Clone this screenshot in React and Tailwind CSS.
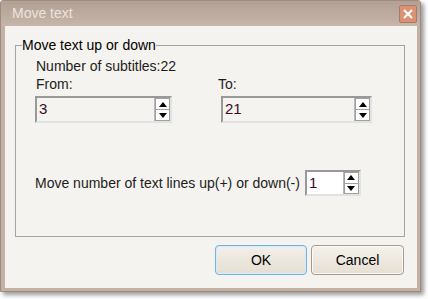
import React from "react";

function Spinner() {
  return (
    <div className="flex flex-col w-[16px] h-full border-l border-[#b8b8b8] bg-white">
      <button className="flex-1 flex items-center justify-center border border-[#a0a0a0] bg-white">
        <svg width="8" height="5" viewBox="0 0 8 5">
          <path d="M0 5 L4 0 L8 5 Z" fill="#000" />
        </svg>
      </button>
      <button className="flex-1 flex items-center justify-center border border-t-0 border-[#a0a0a0] bg-white">
        <svg width="8" height="5" viewBox="0 0 8 5">
          <path d="M0 0 L4 5 L8 0 Z" fill="#000" />
        </svg>
      </button>
    </div>
  );
}

function NumberBox({value, className, bg}) {
  return (
    <div
      className={
        "flex border-2 border-[#999999] border-r-[#e2e2e2] border-b-[#e2e2e2] " +
        bg +
        " " +
        className
      }
    >
      <div className="flex-1 pl-[2px] text-[15px] leading-[21px] text-[#3a0a2a]">
        {value}
      </div>
      <Spinner />
    </div>
  );
}

export default function App() {
  return (
    <div
      className="w-[428px] h-[299px] bg-white text-[14px] text-[#1c1c1c]"
      style={{fontFamily: '"Liberation Sans", Arial, sans-serif'}}
    >
      <div className="w-[421px] h-[292px] flex flex-col bg-[#c4b1a6] border border-[#9d8b80] rounded-t-[3px] shadow-[3px_3px_4px_rgba(0,0,0,0.4)]">
        {/* title bar */}
        <div className="h-[25px] flex items-center justify-between pl-[11px] pr-[3px] bg-gradient-to-b from-[#b3a094] to-[#c6b5aa]">
          <span className="text-[14px] text-[#ece3dd]">Move text</span>
          <button className="w-[18px] h-[18px] flex items-center justify-center rounded-[2px] bg-[#db9273] border border-[#a87b68]">
            <svg width="10" height="10" viewBox="0 0 10 10">
              <path d="M1 1 L9 9 M9 1 L1 9" stroke="#fff" strokeWidth="2" />
            </svg>
          </button>
        </div>

        {/* client area */}
        <div className="flex-1 ml-[4px] mr-[3px] mb-[3px] bg-[#f5f3ef] flex flex-col">
          <fieldset className="mt-[11px] ml-[10px] w-[390px] h-[200px] border border-[#a3a3a3] p-0 m-0">
            <legend className="ml-[6px] p-0 leading-[17px] text-[14px] text-black">
              Move text up or down
            </legend>
            <div className="pl-[19px] pt-[4px] flex flex-col">
              <p className="ml-[1px] leading-[17px]">Number of subtitles:22</p>
              <div className="flex mt-[1px]">
                <div className="flex flex-col w-[137px]">
                  <span className="ml-[1px] leading-[17px]">From:</span>
                  <NumberBox value="3" bg="bg-[#f5f3ef]" className="mt-[3px] w-[137px] h-[27px]" />
                </div>
                <div className="flex flex-col ml-[46px]">
                  <span className="leading-[17px]">To:</span>
                  <NumberBox value="21" bg="bg-[#f5f3ef]" className="mt-[3px] ml-[3px] w-[151px] h-[27px]" />
                </div>
              </div>
              <div className="flex items-center mt-[47px]">
                <span className="leading-[17px]">Move number of text lines up(+) or down(-)</span>
                <NumberBox value="1" bg="bg-white" className="ml-[5px] w-[56px] h-[26px]" />
              </div>
            </div>
          </fieldset>

          <div className="flex justify-end gap-[4px] pr-[13px] mt-[8px]">
            <button className="w-[92px] h-[30px] rounded-[4px] border border-[#6fb3e0] bg-gradient-to-b from-[#f3f0ea] to-[#e5ded2] shadow-[inset_0_0_0_1px_#d7ecf8] text-[14px] text-black">
              OK
            </button>
            <button className="w-[93px] h-[30px] rounded-[4px] border border-[#a8998c] bg-gradient-to-b from-[#f5f2ec] to-[#e6dfd3] shadow-[inset_0_0_0_1px_#fbfaf7] text-[14px] text-black">
              Cancel
            </button>
          </div>
        </div>
      </div>
    </div>
  );
}
